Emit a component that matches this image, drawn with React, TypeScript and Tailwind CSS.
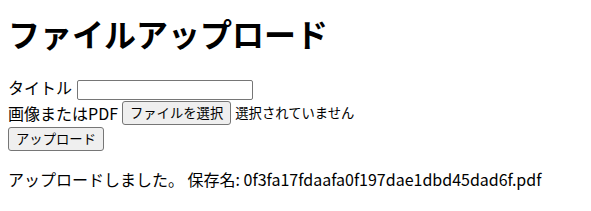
import React from "react";

export default function App() {
  const font = { fontFamily: '"Noto Sans CJK JP", "Noto Sans", sans-serif' };
  return (
    <div className="px-2 pt-[10px] text-black bg-white text-[16px]" style={font}>
      <h1 className="text-[32px] font-bold leading-[46px] m-0">ファイルアップロード</h1>
      <form className="mt-[20px]" onSubmit={(e) => e.preventDefault()}>
        <div className="flex items-start h-[24px]">
          <span className="leading-[23px]">タイトル</span>
          <input
            type="text"
            className="ml-[5px] mt-[4px] h-[20px] w-[176px] border border-[#767676] rounded-[2px] px-[2px] bg-white text-[13.33px] outline-none"
          />
        </div>
        <div className="flex items-center h-[24px] mt-[1px]">
          <span className="leading-[23px]">画像またはPDF</span>
          <button
            type="button"
            className="ml-[4px] h-[24px] px-[7px] border border-[#767676] rounded-[3px] bg-[#efefef] text-[13.33px] leading-[20px]"
          >
            ファイルを選択
          </button>
          <span className="ml-[4px] text-[13.33px] leading-[20px]">選択されていません</span>
        </div>
        <div className="flex items-center h-[24px] mt-[2px]">
          <button
            type="submit"
            className="h-[24px] px-[7px] border border-[#767676] rounded-[3px] bg-[#efefef] text-[13.33px] leading-[20px]"
          >
            アップロード
          </button>
        </div>
      </form>
      <p className="mt-[17px] leading-[23px]">
        アップロードしました。 保存名: 0f3fa17fdaafa0f197dae1dbd45dad6f.pdf
      </p>
    </div>
  );
}
